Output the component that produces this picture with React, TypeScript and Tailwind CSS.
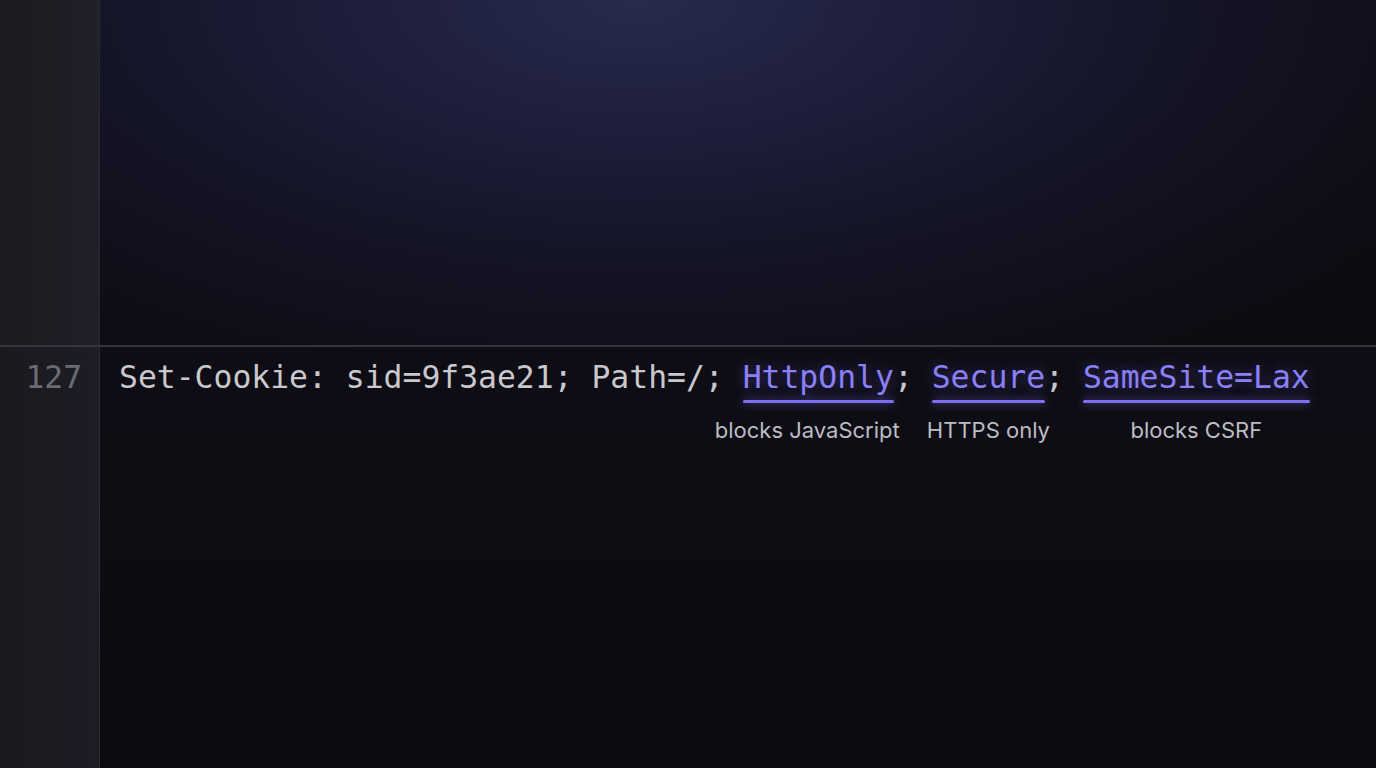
import React from "react";

const mono = { fontFamily: '"DejaVu Sans Mono", "Liberation Mono", monospace' };

function Tok({ text, label, shift = 0 }: { text: string; label: string; shift?: number }) {
  return (
    <span className="relative inline-block">
      <span className="text-[#8b80f6] [text-shadow:0_0_14px_rgba(120,105,245,0.45)]">{text}</span>
      <span className="absolute left-0 right-0 top-[41px] h-[3px] rounded-full bg-[#7e6ff2] shadow-[0_0_10px_rgba(126,111,242,0.75)]" />
      <span
        className="absolute top-[59px] left-1/2 whitespace-nowrap text-[22px] leading-[24px] text-[#bdbcc4]"
        style={{ fontFamily: 'Inter, "Liberation Sans", sans-serif', transform: `translateX(calc(-50% + ${shift}px))` }}
      >
        {label}
      </span>
    </span>
  );
}

export default function App() {
  return (
    <div className="w-[1376px] h-[768px] overflow-hidden flex flex-col bg-[#0b0b10]">
      <div className="flex h-[345px]">
        <div className="w-[100px] shrink-0 bg-gradient-to-r from-[#1b1a1f] to-[#1f2029] border-r border-[#2a2a34]" />
        <div className="flex-1 bg-[radial-gradient(ellipse_900px_420px_at_42%_0%,#282a4e_0%,#1c1d38_35%,#131324_65%,#0d0c13_100%)]" />
      </div>
      <div className="h-[2px] bg-[#34343f]" />
      <div className="flex flex-1">
        <div className="w-[100px] shrink-0 bg-gradient-to-r from-[#1a191e] to-[#1c1d25] border-r border-[#2a2a34] flex justify-end pr-[17px] pt-[12px]">
          <span className="text-[31.3px] leading-[36px] text-[#6c6b74]" style={mono}>127</span>
        </div>
        <div className="flex-1 bg-gradient-to-b from-[#0e0d15] to-[#0b0b0f] pl-[19px] pt-[12px]">
          <div className="text-[31.4px] leading-[36px] text-[#c9c8cd] whitespace-pre" style={mono}>
            Set-Cookie: sid=9f3ae21; Path=/; <Tok text="HttpOnly" label="blocks JavaScript" shift={-11} />; <Tok text="Secure" label="HTTPS only" />; <Tok text="SameSite=Lax" label="blocks CSRF" />
          </div>
        </div>
      </div>
    </div>
  );
}
